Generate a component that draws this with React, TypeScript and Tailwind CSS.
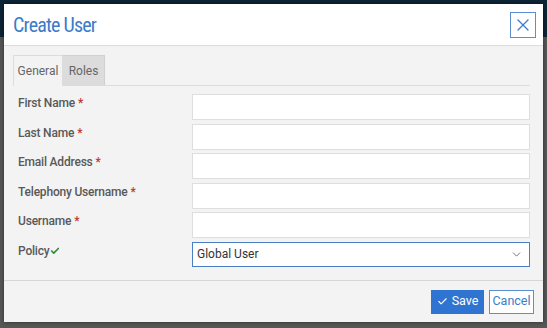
import { X, ChevronDown, Check } from 'lucide-react';

const fields = ['First Name', 'Last Name', 'Email Address', 'Telephony Username', 'Username'];

export default function App() {
  return (
    <div className="relative w-[547px] h-[328px] overflow-hidden bg-[#575757]" style={{ fontFamily: 'Roboto, "Liberation Sans", sans-serif' }}>
      <div className="h-[37px] bg-[#0d2438]" />
      <div className="absolute left-[4px] top-[4px] w-[539px] h-[318px] bg-[#f3f3f3] flex flex-col shadow-[0_0_4px_rgba(0,0,0,0.5)]">
        <div className="h-[42px] bg-white border-b border-[#dcdcdc] flex items-center justify-between pl-[9px] pr-[7px]">
          <h1 className="text-[20px] text-[#3b7bc9] leading-none tracking-[-0.8px] pt-[1px]" style={{ fontFamily: '"Liberation Sans Narrow", "Roboto Condensed", Roboto, sans-serif' }}>Create User</h1>
          <button className="w-[26px] h-[26px] border border-[#5b8fd0] bg-white flex items-center justify-center">
            <X className="w-[20px] h-[20px] text-[#3b7bc9]" strokeWidth={1.5} />
          </button>
        </div>

        <div className="flex-1 pt-[9px] pl-[9px] pr-[13px]">
          <div className="flex border-b border-[#dcdcdc] h-[31px]">
            <div className="w-[50px] border border-b-0 border-[#dcdcdc] bg-[#f3f3f3] flex items-center justify-center text-[12px] text-[#666] -mb-px">General</div>
            <div className="w-[42px] border-t border-r border-[#d0d0d0] bg-[#dcdcdc] flex items-center justify-center text-[12px] text-[#666]">Roles</div>
          </div>

          <div className="flex flex-col gap-[3.5px] pt-[8px] pl-[5px]">
            {fields.map((f) => (
              <div key={f} className="flex items-start h-[26px]">
                <div className="w-[174px] text-[12px] font-medium tracking-[-0.2px] text-[#595959]">
                  {f}<span className="text-[#c0392b] ml-[3px]">*</span>
                </div>
                <div className="flex-1 h-[26px] bg-white border border-[#dedede]" />
              </div>
            ))}
            <div className="flex items-start h-[25px]">
              <div className="w-[174px] text-[12px] font-medium tracking-[-0.2px] text-[#595959] flex items-center">
                Policy<Check className="w-[10px] h-[10px] text-[#2e8b3a] ml-[1px]" strokeWidth={4} />
              </div>
              <div className="flex-1 h-[25px] bg-white border border-[#4a7fc4] flex items-center justify-between pl-[4px] pr-[6px] text-[12px] text-[#333]">
                Global User
                <ChevronDown className="w-[13px] h-[13px] text-[#555]" strokeWidth={1.5} />
              </div>
            </div>
          </div>
        </div>

        <div className="h-[42px] border-t border-[#d6d6d6] flex items-center justify-end gap-[5px] pr-[9px]">
          <button className="h-[24px] w-[53px] bg-[#2f74d0] text-white text-[12.5px] flex items-center justify-center gap-[4px]">
            <Check className="w-[11px] h-[11px]" strokeWidth={2.5} />Save
          </button>
          <button className="h-[24px] w-[45px] bg-white border border-[#5b8fd0] text-[#3b7bc9] text-[12.5px]">Cancel</button>
        </div>
      </div>
    </div>
  );
}
